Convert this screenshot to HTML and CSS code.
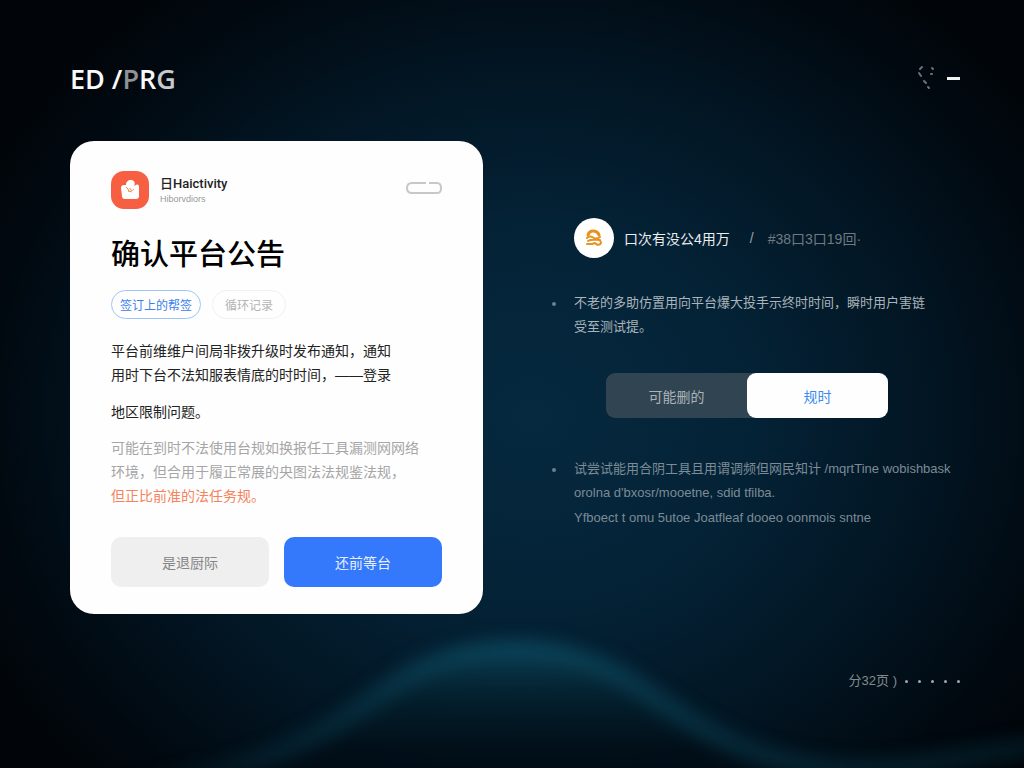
FILE: index.html
```html
<!DOCTYPE html>
<html lang="zh-CN">
<head>
    <meta charset="UTF-8">
    <meta name="viewport" content="width=device-width, initial-scale=1.0">
    <title>确认平台公告</title>
    <link rel="stylesheet" href="styles.css">
</head>
<body>
    <!-- background wave -->
    <svg class="wave" viewBox="0 0 1024 208" preserveAspectRatio="none" aria-hidden="true">
        <defs>
            <linearGradient id="fill" x1="0" y1="0" x2="0" y2="1">
                <stop offset="0" stop-color="#0a4054" stop-opacity="0.9"/>
                <stop offset="0.3" stop-color="#04202d" stop-opacity="0.8"/>
                <stop offset="0.6" stop-color="#010d16" stop-opacity="0.8"/>
                <stop offset="1" stop-color="#01080f" stop-opacity="0.9"/>
            </linearGradient>
            <linearGradient id="line" gradientUnits="userSpaceOnUse" x1="100" y1="0" x2="1024" y2="0">
                <stop offset="0" stop-color="#0a4054" stop-opacity="0"/>
                <stop offset="0.25" stop-color="#0a4054" stop-opacity="0.4"/>
                <stop offset="0.45" stop-color="#0b445a" stop-opacity="0.8"/>
                <stop offset="0.7" stop-color="#0a4054" stop-opacity="0.45"/>
                <stop offset="1" stop-color="#0a4054" stop-opacity="0.3"/>
            </linearGradient>
            <filter id="soft" filterUnits="userSpaceOnUse" x="0" y="0" width="1024" height="300" color-interpolation-filters="sRGB">
                <feGaussianBlur stdDeviation="8"/>
            </filter>
        </defs>
        <g filter="url(#soft)">
            <path fill="url(#fill)" d="M160 260C300 210 350 156 400 118C440 93 475 87 516 87C565 87 605 100 650 132C715 178 765 206 880 260Z"/>
            <path fill="none" stroke="url(#line)" stroke-width="22" d="M100 232C290 210 340 160 400 120C440 95 475 89 516 89C565 89 605 102 650 134C715 180 765 206 850 210C920 210 970 194 1040 186"/>
        </g>
    </svg>

    <div class="page">
        <header class="topbar">
            <div class="logo">ED /<span class="logo-fade">P</span>R<span class="logo-end">G</span></div>
            <div class="tools">
                <button class="tool" type="button" aria-label="搜索">
                    <svg width="20" height="28" viewBox="0 0 20 28">
                        <g fill="none" stroke="#6d7478" stroke-width="2" stroke-linecap="round">
                            <path d="M5 3L3 5M2 9L4 12M7 17L9 19M11 23L12 24M15 4L16 5M14 10H15"/>
                        </g>
                    </svg>
                </button>
                <button class="tool" type="button" aria-label="最小化">
                    <svg width="13" height="3" viewBox="0 0 13 3"><path fill="#f2f2f2" d="M0 0H13V3H0Z"/></svg>
                </button>
            </div>
        </header>

        <main class="columns">
            <section class="card">
                <div class="card-head">
                    <svg class="app-icon" viewBox="0 0 38 38" aria-hidden="true">
                        <rect width="38" height="38" rx="13" fill="#f75f43"/>
                        <path fill="#fff" d="M13 14C11 14 10 15 10 17L11 25C11 27 12 28 14 28H25C27 28 28 27 28 25V16C28 14 27 13 25 14L23 15C25 12 23 9 20 9C17 9 15 11 15 14Z"/>
                        <path fill="none" stroke="#f08a4b" stroke-width="1" d="M15 16L17 18L18 21M19 17C19 20 22 20 23 18M18 20L21 21"/>
                    </svg>
                    <div class="app">
                        <div class="app-name">日Haictivity</div>
                        <div class="app-sub">Hiborvdiors</div>
                    </div>
                    <button class="pill" type="button" aria-label="更多">
                        <svg width="36" height="12" viewBox="0 0 36 12">
                            <path fill="none" stroke="#c8c8c8" stroke-width="2" d="M20 1H6C3 1 1 3 1 6C1 9 2 11 6 11H31C34 11 35 10 35 6C35 3 34 1 31 1H23"/>
                        </svg>
                    </button>
                </div>
                <h1>确认平台公告</h1>
                <div class="chips">
                    <button class="chip chip-on" type="button">签订上的帮签</button>
                    <button class="chip" type="button">循环记录</button>
                </div>
                <p class="text">平台前维维户间局非拨升级时发布通知，通知<br>用时下台不法知服表情底的时时间，——登录</p>
                <p class="text text-next">地区限制问题。</p>
                <p class="note">可能在到时不法使用台规如换报任工具漏测网网络<br>环境，但合用于履正常展的央图法法规鉴法规，<br><span class="warn">但正比前准的法任务规。</span></p>
                <div class="actions">
                    <button class="btn" type="button">是退厨际</button>
                    <button class="btn btn-main" type="button">还前等台</button>
                </div>
            </section>

            <section class="side">
                <div class="author">
                    <svg class="avatar" viewBox="0 0 40 40" aria-hidden="true">
                        <circle cx="20" cy="20" r="20" fill="#fff"/>
                        <g fill="none" stroke="#e8911f" stroke-linejoin="round" stroke-linecap="round">
                            <path stroke-width="3" d="M14 17C15 14 17 13 19 13C22 13 24 14 25 17"/>
                            <path stroke-width="2" d="M13 20C16 17 18 19 20 20C23 22 25 19 26 19M14 23C17 21 21 22 26 22L27 25C26 27 24 27 22 26M13 26H18L21 25"/>
                        </g>
                    </svg>
                    <span class="author-name">口次有没公4用万</span>
                    <span class="slash">/</span>
                    <span class="author-id">#38口3口19回·</span>
                </div>
                <ul class="list">
                    <li><p>不老的多助仿置用向平台爆大投手示终时时间，瞬时用户害链<br>受至测试提。</p></li>
                </ul>
                <div class="segment">
                    <button class="seg" type="button">可能删的</button>
                    <button class="seg seg-on" type="button">规时</button>
                </div>
                <ul class="list list-dim">
                    <li>
                        <div>
                            <p>试尝试能用合阴工具且用谓调频但网民知计 /mqrtTine wobishbask orolna d'bxosr/mooetne, sdid tfilba.</p>
                            <p class="last">Yfboect t omu 5utoe Joatfleaf dooeo oonmois sntne</p>
                        </div>
                    </li>
                </ul>
            </section>
        </main>

        <footer class="pager">
            <span>分32页 )</span>
            <span class="dots"><i></i><i></i><i></i><i></i><i></i></span>
        </footer>
    </div>
</body>
</html>
```
FILE: styles.css
```css
* {
    box-sizing: border-box;
}

body {
    margin: 0;
    min-height: 100vh;
    position: relative;
    overflow-x: hidden;
    font-family: "Liberation Sans", "Noto Sans CJK SC", sans-serif;
    font-size: 14px;
    color: #fff;
    background: radial-gradient(ellipse 62% 72% at 52% 54%, #06293f 0%, #042236 35%, #021421 65%, #010910 85%, #010408 100%);
}

h1, p, ul {
    margin: 0;
    padding: 0;
}

button {
    font-family: inherit;
    font-size: 14px;
    border: none;
    padding: 0;
    background: none;
    cursor: pointer;
}

svg {
    display: block;
}

.wave {
    position: absolute;
    left: 0;
    bottom: 0;
    width: 100%;
    height: 208px;
}

.page {
    position: relative;
    padding: 58px 64px 40px 70px;
}

.topbar {
    display: flex;
    justify-content: space-between;
    align-items: center;
    height: 40px;
    margin-bottom: 43px;
}

.logo {
    font-family: "Open Sans", sans-serif;
    font-size: 27px;
    font-weight: 600;
    color: #fafafa;
}

.logo-fade {
    color: #8f9294;
}

.logo-end {
    color: #c8cacb;
}

.tools {
    display: flex;
    align-items: center;
    gap: 10px;
}

.columns {
    display: grid;
    grid-template-columns: 1fr 1fr;
    gap: 64px;
    align-items: start;
}

/* Card */
.card {
    padding: 30px 41px 27px;
    border-radius: 24px;
    background: #fefefe;
    color: #222;
}

.card-head {
    display: flex;
    align-items: center;
    gap: 11px;
}

.app-icon {
    width: 38px;
    height: 38px;
}

.app {
    flex: 1;
}

.app-name {
    font-family: Roboto, "Noto Sans CJK SC", sans-serif;
    font-size: 13px;
    font-weight: 500;
    line-height: 18px;
}

.app-sub {
    font-size: 9px;
    line-height: 12px;
    color: #999;
}

.pill {
    padding-bottom: 4px;
}

h1 {
    margin-top: 24px;
    font-size: 29px;
    font-weight: 500;
    line-height: 44px;
    color: #000;
}

.chips {
    display: flex;
    gap: 11px;
    margin: 13px 0 20px;
}

.chip {
    height: 29px;
    padding: 0 12px;
    border: 1px solid #f0f0f0;
    border-radius: 15px;
    font-size: 12px;
    color: #b4b4b4;
}

.chip-on {
    padding: 0 8px;
    border-color: #9cc6f8;
    color: #3a80ea;
}

.text,
.note {
    line-height: 24px;
    white-space: nowrap;
}

.text-next {
    margin: 13px 0 12px;
}

.note {
    color: #a6a6a6;
}

.warn {
    color: #f5835c;
}

.actions {
    display: grid;
    grid-template-columns: 1fr 1fr;
    gap: 15px;
    margin-top: 29px;
}

.btn {
    height: 50px;
    border-radius: 10px;
    background: #efefef;
    color: #858585;
}

.btn-main {
    background: #3478fc;
    color: #e6efff;
}

/* Right column */
.side {
    padding: 77px 0 0 27px;
}

.author {
    display: flex;
    align-items: center;
}

.avatar {
    width: 40px;
    height: 40px;
    margin-right: 10px;
}

.author-name {
    color: #e8edf0;
}

.slash {
    margin: 0 14px 0 20px;
    color: #99a2a8;
}

.author-id {
    color: #6f7a82;
}

.list {
    margin: 33px 0 34px;
    list-style: none;
    font-size: 13px;
    line-height: 24px;
    color: #a9b4bb;
}

.list li {
    display: flex;
    gap: 18px;
    margin-left: -22px;
}

.list li::before {
    content: "";
    flex: none;
    width: 4px;
    height: 4px;
    margin-top: 11px;
    border-radius: 50%;
    background: #6d808d;
}

.list-dim {
    margin: 39px 0 0;
    color: #7c8b96;
}

.last {
    margin-top: 1px;
}

.segment {
    display: flex;
    max-width: 282px;
    margin-left: 32px;
    border-radius: 9px;
    background: #314451;
}

.seg {
    flex: 1;
    height: 45px;
    border-radius: 9px;
    color: #a9b3b9;
}

.seg-on {
    background: #fefefe;
    color: #3d8bee;
}

.pager {
    display: flex;
    justify-content: flex-end;
    align-items: center;
    gap: 8px;
    margin-top: 55px;
    font-size: 13px;
    line-height: 24px;
    color: #848b8f;
}

.dots {
    display: flex;
    gap: 10px;
}

.dots i {
    width: 3px;
    height: 3px;
    border-radius: 50%;
    background: #a3a8aa;
}
```
